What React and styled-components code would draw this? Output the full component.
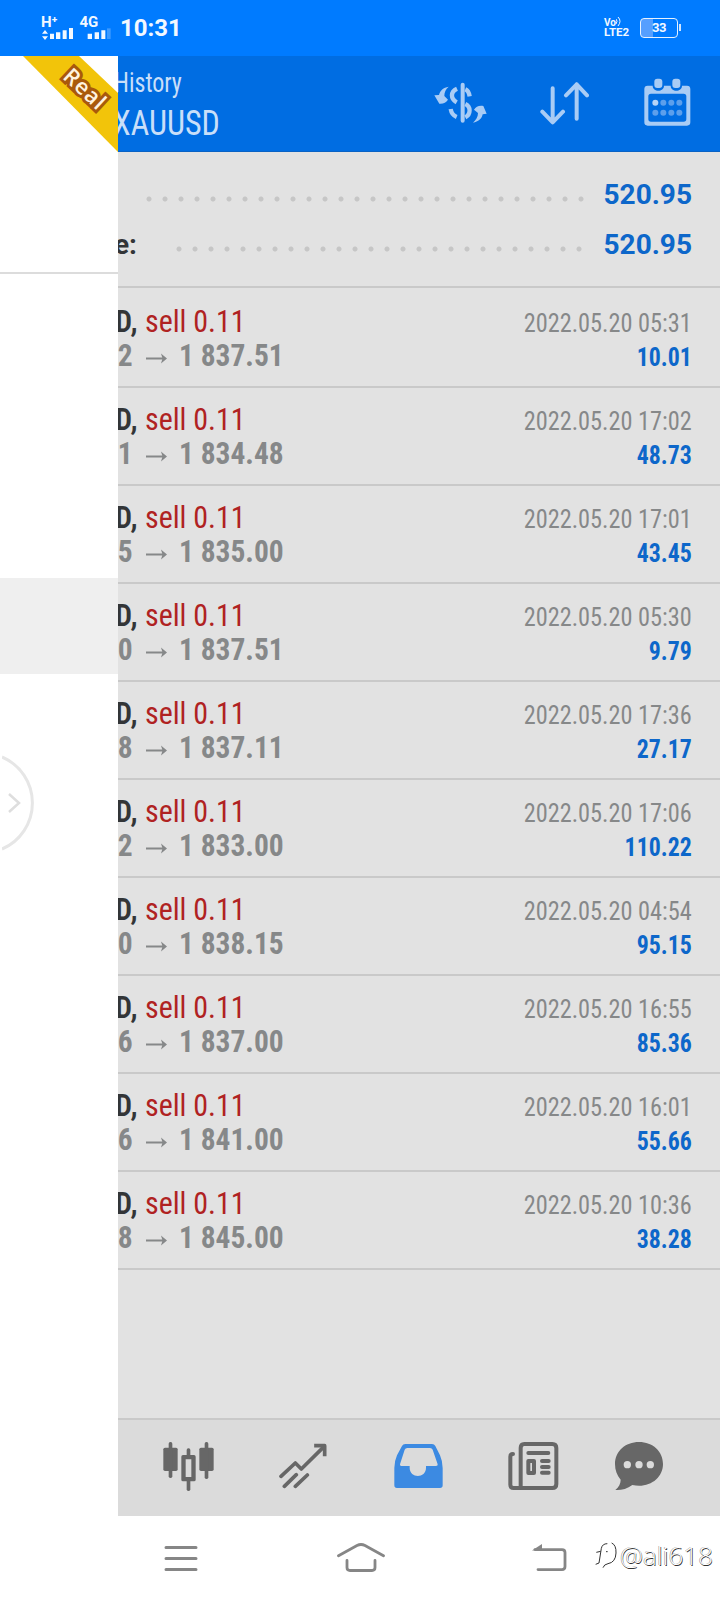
import React from "react";
import styled, { createGlobalStyle, css } from "styled-components";

const GlobalStyle = createGlobalStyle`
  * {
    box-sizing: border-box;
  }
  body {
    margin: 0;
    background: #fff;
    font-family: Roboto, "Liberation Sans", sans-serif;
  }
  svg {
    display: block;
    flex-shrink: 0;
  }
`;

const deals = [
  { open: "2", close: "1 837.51", time: "2022.05.20 05:31", profit: "10.01" },
  { open: "1", close: "1 834.48", time: "2022.05.20 17:02", profit: "48.73" },
  { open: "5", close: "1 835.00", time: "2022.05.20 17:01", profit: "43.45" },
  { open: "0", close: "1 837.51", time: "2022.05.20 05:30", profit: "9.79" },
  { open: "8", close: "1 837.11", time: "2022.05.20 17:36", profit: "27.17" },
  { open: "2", close: "1 833.00", time: "2022.05.20 17:06", profit: "110.22" },
  { open: "0", close: "1 838.15", time: "2022.05.20 04:54", profit: "95.15" },
  { open: "6", close: "1 837.00", time: "2022.05.20 16:55", profit: "85.36" },
  { open: "6", close: "1 841.00", time: "2022.05.20 16:01", profit: "55.66" },
  { open: "8", close: "1 845.00", time: "2022.05.20 10:36", profit: "38.28" },
];

const condensed = css`
  font-family: "Roboto Condensed", Roboto, sans-serif;
  font-stretch: 75%;
`;

const Screen = styled.div`
  position: relative;
  display: flex;
  flex-direction: column;
  width: 720px;
  height: 1600px;
  overflow: hidden;
  background: #fff;
`;

const StatusBar = styled.div`
  display: flex;
  align-items: flex-start;
  height: 56px;
  padding: 17px 42px 0 41px;
  background: #007bff;
  color: #f2f8ff;
`;

const Signal = styled.div`
  width: 38.5px;
  height: 24px;
  font-size: 15px;
  font-weight: 700;
  line-height: 11px;
  white-space: nowrap;
`;

const Clock = styled.div`
  margin: -1px auto 0 2px;
  font-size: 24px;
  font-weight: 700;
  line-height: 24px;
`;

const Volte = styled.div`
  margin: 0 7px 0 0;
  width: 29px;
  font-size: 11.5px;
  font-weight: 700;
  line-height: 11px;
`;

const VoLine = styled.div`
  display: flex;
  height: 10px;
  font-size: 10px;
  line-height: 12px;
`;

const Battery = styled.div`
  position: relative;
  width: 38px;
  height: 20px;
  margin-top: 1px;
  border: 1.5px solid #e6f2ff;
  border-radius: 4px;
  background: linear-gradient(to right, #559fff 33%, transparent 33%);
  font-size: 13px;
  font-weight: 700;
  line-height: 18px;
  letter-spacing: -0.5px;
  text-align: center;

  &::after {
    content: "";
    position: absolute;
    top: 5px;
    right: -4px;
    width: 2px;
    height: 7px;
    background: #cfe5ff;
  }
`;

const Header = styled.div`
  display: flex;
  height: 96px;
  padding: 0 29px 0 114px;
  background: #006de2;
  border-bottom: 1px solid #0a62c4;
  color: #c9dff9;
`;

const Titles = styled.div`
  ${condensed}
  flex: 1;
  white-space: nowrap;
`;

const Title = styled.div`
  margin-top: 11px;
  font-size: 27px;
  line-height: 32px;
  transform: scaleX(0.89);
  transform-origin: left;
`;

const Subtitle = styled.div`
  margin: 3px 0 0 -1px;
  font-size: 34.5px;
  line-height: 42px;
  transform: scaleX(0.93);
  transform-origin: left;
`;

const Actions = styled.div`
  display: flex;
  gap: 55px;
  padding-top: 22px;
`;

const Content = styled.div`
  flex: 1;
  background: #e2e2e2;
`;

const Summary = styled.div`
  height: 136px;
  padding-top: 17px;
  border-bottom: 2px solid #c9c9c9;
`;

const SummaryRow = styled.div`
  display: flex;
  align-items: center;
  height: 50px;
  padding-right: 28px;
  font-size: 28px;
  font-weight: 700;
  color: #0d67ca;
`;

const SummaryLabel = styled.div`
  width: ${(p) => p.$width}px;
  padding-left: 114px;
  color: #333537;
`;

const Dots = styled.div`
  width: ${(p) => p.$count * 16}px;
  height: 6px;
  margin: 9px auto 0 0;
  background: radial-gradient(circle, #c6c6c6 2px, transparent 3px) 0 0 / 16px
    6px;
`;

const Deal = styled.div`
  ${condensed}
  display: flex;
  justify-content: space-between;
  height: 98px;
  padding: 15px 28px 0 115px;
  border-bottom: 2px solid #c9c9c9;
  white-space: nowrap;

  &:first-child {
    height: 100px;
    padding-top: 17px;
  }
`;

const DealLine = styled.div`
  display: flex;
  height: 34px;
  font-size: 31.5px;
  line-height: 34px;
`;

const Symbol = styled.span`
  width: 30px;
  font-weight: 600;
  color: #333537;
  transform: scaleX(0.96);
  transform-origin: left;
`;

const Side = styled.span`
  color: #b02222;
  transform: scaleX(0.95);
  transform-origin: left;
`;

const Price = styled.span`
  width: ${(p) => p.$width || "auto"};
  padding-left: ${(p) => p.$pad || 0};
  font-weight: 700;
  color: #868889;
  transform: scaleX(0.935);
  transform-origin: left;
`;

const DealRight = styled.div`
  text-align: right;
  padding-top: 1px;
`;

const Time = styled.div`
  height: 34px;
  font-size: 26px;
  line-height: 34px;
  color: #868889;
  transform: scaleX(0.935);
  transform-origin: right;
`;

const Profit = styled(Time)`
  font-size: 25.5px;
  font-weight: 700;
  color: #0d67ca;
`;

const TabBar = styled.div`
  display: grid;
  grid-template-columns: repeat(4, 115px) 96px;
  justify-items: center;
  height: 98px;
  padding: 22px 0 0 131px;
  border-top: 2px solid #c9c9c9;
  background: #dbdbdb;
`;

const NavBar = styled.div`
  display: grid;
  grid-template-columns: 180px 180px 196px;
  justify-items: center;
  height: 84px;
  padding: 26px 0 0 91px;
  background: #fff;
`;

const Drawer = styled.div`
  position: absolute;
  top: 56px;
  left: 0;
  width: 118px;
  height: 1460px;
  overflow: hidden;
  background: #fff;
`;

const DrawerHead = styled.div`
  height: 218px;
  border-bottom: 2px solid #dcdcdc;
`;

const Ribbon = styled.div`
  width: 118px;
  height: 96px;
  background: #f2c40a;
  clip-path: polygon(23px 0, 79px 0, 118px 37px, 118px 96px);
`;

const RibbonText = styled.div`
  position: absolute;
  top: 17px;
  left: 51px;
  width: 70px;
  color: #fff3e0;
  font-family: "Open Sans", sans-serif;
  font-size: 22px;
  font-weight: 600;
  line-height: 30px;
  letter-spacing: 1px;
  text-align: center;
  -webkit-text-stroke: 6px #a9590b;
  paint-order: stroke fill;
  stroke-linejoin: round;
  transform: rotate(43deg);
`;

const DrawerItem = styled.div`
  height: 96px;
  margin-top: 304px;
  background: #efefef;
`;

const Handle = styled.div`
  position: absolute;
  top: 755px;
  left: 2px;
`;

const Watermark = styled.div`
  position: absolute;
  right: 7px;
  bottom: 29px;
  display: flex;
  align-items: center;
  gap: 3px;
  color: #fff;
  font-family: "Open Sans", sans-serif;
  font-size: 26px;
  font-weight: 300;
  line-height: 32px;
  text-shadow: 0.7px 0.7px 0.5px #333, -0.5px -0.5px 0.5px #888;
`;

function Bars({ arrows, dimLast }) {
  return (
    <svg width="36" height="12" viewBox="123 81 108 36" fill="#f2f8ff">
      {arrows && <path d="M135 87l9 11h-18zM135 117l-9-11h18z" />}
      <path
        d={
          arrows
            ? "M150 98h12v16h-12zM168 94h13v20h-13zM188 88h12v26h-12zM207 81h12v33h-12z"
            : "M146 98h13v16h-13zM167 94h13v20h-13zM187 88h12v26h-12z"
        }
      />
      {dimLast && <path d="M204 82h11v32h-11z" opacity="0.25" />}
    </svg>
  );
}

const ActionIcon = styled.svg`
  margin: ${(p) => p.$margin || 0};
`;

function DollarIcon() {
  return (
    <ActionIcon $margin="3px -2px 0 0" width="53" height="44" viewBox="40 244 159 132" fill="none" stroke="#a9ccf5" strokeWidth="13">
      <path d="M126 255v108" strokeWidth="12" strokeLinecap="round" />
      <path d="M109 267c-20 9-20 30-1 41M134 269c7 3 11 10 13 21M90 328c2 12 8 20 18 24M134 313c17 8 17 31 0 40" />
      <path
        d="M84 261c-16 3-26 11-29 25l-14 1 15 25c12 1 20-3 26-12l-11-11c0-11 4-20 13-28zM157 369c16-3 26-11 29-25l12-2-10-23c-14-2-22 2-28 11l12 10c0 12-6 20-15 29z"
        fill="#a9ccf5"
        stroke="none"
      />
    </ActionIcon>
  );
}

function SortIcon() {
  return (
    <ActionIcon $margin="4px 0 0 0" width="49" height="44" viewBox="358 246 147 132" fill="none" stroke="#a9ccf5" strokeWidth="12" strokeLinecap="round" strokeLinejoin="round">
      <path d="M396 265v102M365 335l31 32 31-32M468 356V253M436 286l32-33 31 33" />
    </ActionIcon>
  );
}

function CalendarIcon() {
  return (
    <svg width="47" height="48" viewBox="674 235 141 144">
      <path
        fill="#a9ccf5"
        fillRule="evenodd"
        d="M685 258h15c0 20 34 20 34 0h20c0 20 34 20 34 0h15q10 0 10 10v100q0 10-10 10H685q-10 0-10-10V268q0-10 10-10zM695 282q-8 0-8 8v68q0 8 8 8h98q8 0 8-8v-68q0-8-8-8z"
      />
      <rect x="705" y="237" width="24" height="28" rx="9" fill="#a9ccf5" />
      <rect x="759" y="237" width="24" height="28" rx="9" fill="#a9ccf5" />
      {[309, 339].map((y) =>
        [708, 732, 756, 780].map((x) => (
          <circle key={`${x}-${y}`} cx={x} cy={y} r="9" fill={x === 708 && y === 309 ? "#b5d3f7" : "#5c9fec"} />
        ))
      )}
    </svg>
  );
}

function CandlesIcon() {
  return (
    <svg width="51" height="50" viewBox="189 126 153 150" fill="#676767">
      <rect x="190" y="143" width="43" height="70" rx="5" />
      <rect x="206" y="126" width="11" height="108" rx="5" />
      <rect x="298" y="143" width="43" height="70" rx="5" />
      <rect x="314" y="126" width="11" height="111" rx="5" />
      <path fillRule="evenodd" d="M249 165h33q5 0 5 5v69q0 5-5 5h-33q-5 0-5-5v-69q0-5 5-5zM257 178v53h17v-53z" />
      <rect x="260" y="145" width="11" height="25" rx="5" />
      <rect x="260" y="238" width="11" height="35" rx="5" />
    </svg>
  );
}

function TrendIcon() {
  return (
    <svg width="49" height="50" viewBox="538 126 147 150" fill="none" stroke="#676767" strokeWidth="11" strokeLinecap="round" strokeLinejoin="round">
      <path d="M544 229l43-40 18 18 68-67M554 259l36-35M587 259l36-34" />
      <path d="M649 137h26v26" strokeLinecap="square" />
    </svg>
  );
}

function InboxIcon() {
  return (
    <svg width="49" height="50" viewBox="-18 126 147 150">
      <path
        fill="#3c8ae2"
        fillRule="evenodd"
        d="M16 132h80q7 0 10 6l14 28q8 18 8 38v52q0 8-8 8H-9q-8 0-8-8v-52q0-20 8-38L6 138q3-6 10-6zM22 144q-6 0-8 5L0 193q-1 5 4 5h25v5c0 33 49 33 49 0v-5h30q6 0 5-5L98 149q-2-5-8-5z"
      />
    </svg>
  );
}

function NewsIcon() {
  return (
    <svg width="51" height="50" viewBox="325 126 153 150" fill="none" stroke="#676767" strokeWidth="12" strokeLinecap="round" strokeLinejoin="round">
      <path d="M340 162q-8 0-8 8v84q0 10 10 10h116q12 0 12-12V144q0-12-12-12h-84q-11 0-11 12v120" />
      <path d="M386 159h60M386 183h17v36h-17zM427 183h20M427 201h20M427 218h20" />
    </svg>
  );
}

function ChatIcon() {
  return (
    <svg width="49" height="50" viewBox="645 126 147 150" fill="#676767">
      <path d="M717 126c41 0 72 28 72 66 0 43-42 74-92 63-16 12-34 16-51 15 11-10 16-19 16-31-11-12-17-29-17-47 0-38 31-66 72-66z" />
      {[682, 717, 751].map((x) => (
        <circle key={x} cx={x} cy="194" r="11" fill="#dbdbdb" />
      ))}
    </svg>
  );
}

function App() {
  return (
    <>
      <GlobalStyle />
      <Screen>
        <StatusBar>
          <Signal>
            H⁺
            <Bars arrows />
          </Signal>
          <Signal>
            4G
            <Bars dimLast />
          </Signal>
          <Clock>10:31</Clock>
          <Volte>
            <VoLine>
              Vo
              <svg width="5" height="9" viewBox="0 0 5 9" fill="none" stroke="#f2f8ff">
                <path d="M0 2q2 2 0 5M2 0q4 4 0 9" />
              </svg>
            </VoLine>
            LTE2
          </Volte>
          <Battery>33</Battery>
        </StatusBar>

        <Header>
          <Titles>
            <Title>History</Title>
            <Subtitle>XAUUSD</Subtitle>
          </Titles>
          <Actions>
            <DollarIcon />
            <SortIcon />
            <CalendarIcon />
          </Actions>
        </Header>

        <Content>
          <Summary>
            <SummaryRow>
              <SummaryLabel $width={140.5} />
              <Dots $count={28} />
              520.95
            </SummaryRow>
            <SummaryRow>
              <SummaryLabel $width={170.5}>e:</SummaryLabel>
              <Dots $count={26} />
              520.95
            </SummaryRow>
          </Summary>
          <div>
            {deals.map((deal) => (
              <Deal key={deal.time}>
                <div>
                  <DealLine>
                    <Symbol>D,</Symbol>
                    <Side>sell 0.11</Side>
                  </DealLine>
                  <DealLine>
                    <Price $width="31px" $pad="3px">
                      {deal.open}
                    </Price>
                    <svg width="33" height="34" viewBox="0 0 33 34" stroke="#868889" strokeWidth="2">
                      <path d="M0 19.5h19" />
                      <path d="M15 14.5l6 5-6 5 1.5-5z" fill="#868889" stroke="none" />
                    </svg>
                    <Price>{deal.close}</Price>
                  </DealLine>
                </div>
                <DealRight>
                  <Time>{deal.time}</Time>
                  <Profit>{deal.profit}</Profit>
                </DealRight>
              </Deal>
            ))}
          </div>
        </Content>

        <TabBar>
          <CandlesIcon />
          <TrendIcon />
          <InboxIcon />
          <NewsIcon />
          <ChatIcon />
        </TabBar>

        <NavBar>
          <svg width="34" height="32" viewBox="0 0 34 32" stroke="#868686" strokeWidth="3" strokeLinecap="round">
            <path d="M2 5.5h30M2 16.5h30M2 27.5h30" />
          </svg>
          <svg width="48" height="32" viewBox="0 0 48 32" fill="none" stroke="#868686" strokeWidth="2.8" strokeLinecap="round">
            <path d="M1.5 13.7L20 3.5q4-2 8 0L46.5 13.7M10 18.5v7q0 3 3 3h22q3 0 3-3v-7" />
          </svg>
          <svg width="35" height="32" viewBox="0 0 35 32" fill="none" stroke="#868686" strokeWidth="2.8" strokeLinecap="round">
            <path d="M3 7.6h27q3 0 3 3v14q0 3-3 3H6" />
            <path d="M0 8.5l10-6.5v6.5z" fill="#868686" stroke="none" />
          </svg>
        </NavBar>

        <Drawer>
          <DrawerHead>
            <Ribbon />
            <RibbonText>Real</RibbonText>
          </DrawerHead>
          <DrawerItem />
        </Drawer>

        <Handle>
          <svg width="33" height="96" viewBox="0 0 33 96" fill="none" stroke="#e6e6e6" strokeWidth="3">
            <path d="M0 2A50 50 0 0 1 0 94" />
            <path d="M7 39l10 9-10 9" stroke="#dedede" strokeWidth="2.5" />
          </svg>
        </Handle>

        <Watermark>
          <svg width="23" height="28" viewBox="42 78 69 84" fill="none" stroke="#333" strokeWidth="3">
            <path d="M47 148l10-4 7-44q3-14 18-14M49 112l13-3M78 110h5" />
            <path d="M95 84q14 6 13 30-1 28-24 32-12 2-15 12" />
          </svg>
          @ali618
        </Watermark>
      </Screen>
    </>
  );
}

export default App;
